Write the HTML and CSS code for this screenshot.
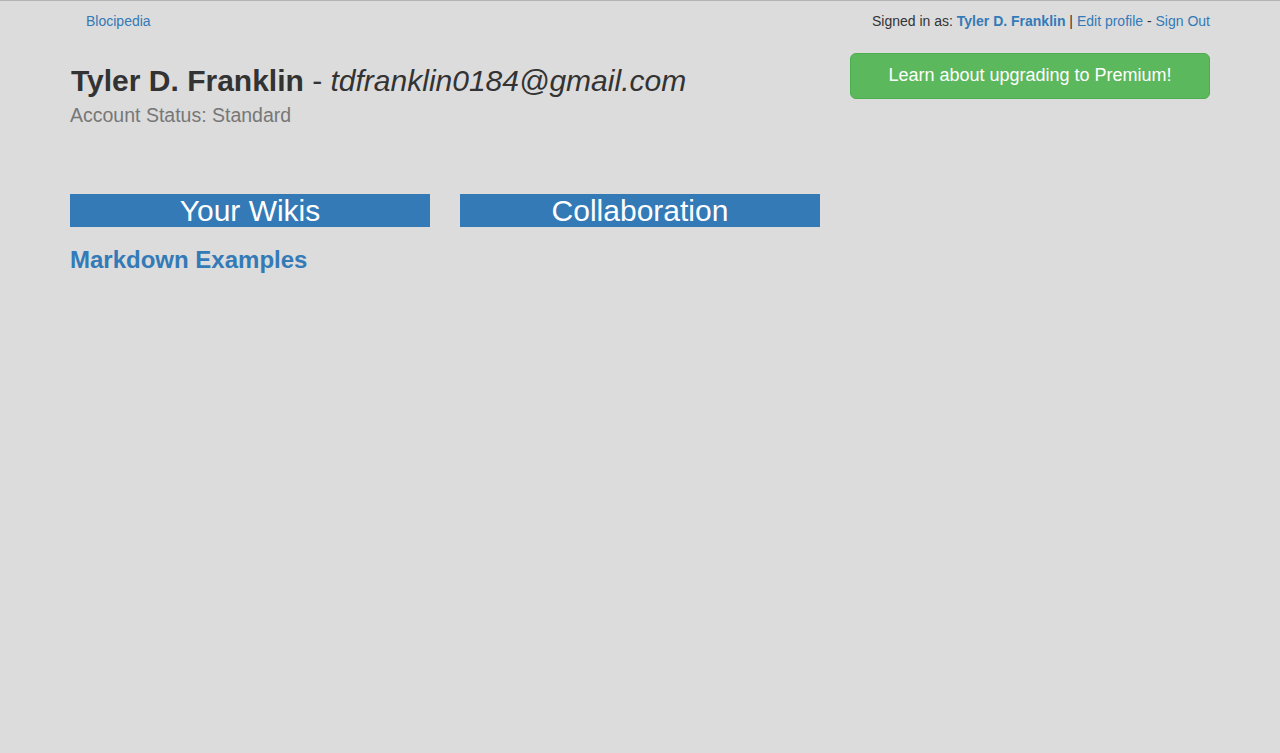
FILE: index.html
```html
<!DOCTYPE html>
<html>
<head>
<meta charset="utf-8">
<link rel="stylesheet" href="styles.css">
</head>
<body>
<div class="topline"></div>
<div class="container">
  <nav class="navbar">
    <a class="brand" href="#">Blocipedia</a>
    <div class="user-nav">Signed in as: <a class="uname" href="#">Tyler D. Franklin</a> | <a href="#">Edit profile</a> - <a href="#">Sign Out</a></div>
  </nav>
  <div class="row">
    <div class="col-8">
      <h2 class="title"><strong>Tyler D. Franklin</strong> - <em>tdfranklin0184@gmail.com</em></h2>
      <div class="status">Account Status: Standard</div>
    </div>
    <div class="col-4">
      <a class="btn-premium" href="#">Learn about upgrading to Premium!</a>
    </div>
  </div>
  <div class="row lists">
    <div class="col-4">
      <div class="box-head">Your Wikis</div>
      <h3 class="wiki"><a href="#">Markdown Examples</a></h3>
    </div>
    <div class="col-4">
      <div class="box-head">Collaboration</div>
    </div>
  </div>
</div>
</body>
</html>
```
FILE: styles.css
```css
html, body {
  margin: 0;
  padding: 0;
  background: #dcdcdc;
  font-family: "Liberation Sans", Arial, sans-serif;
  font-size: 14px;
  line-height: 1.42857;
  color: #333;
}
a { color: #337ab7; text-decoration: none; }
.topline { height: 1px; background: #b4b4b4; }
.container {
  width: 1140px;
  margin: 0 auto;
  padding: 0 15px;
}
.navbar {
  display: flex;
  justify-content: space-between;
  align-items: flex-start;
  padding-top: 11px;
  height: 40px;
}
.brand { margin-left: 16px; }
.uname { font-weight: bold; }
.row {
  display: flex;
  margin: 0 -15px;
}
.col-8 { width: 780px; padding: 0 15px; box-sizing: border-box; flex: none; }
.col-4 { width: 390px; padding: 0 15px; box-sizing: border-box; flex: none; }
.title {
  margin: 12px 0 0;
  font-size: 30px;
  font-weight: normal;
  line-height: 1.1;
  padding-left: 1px;
}
.title strong { font-weight: bold; }
.status {
  font-size: 19.5px;
  color: #777;
  margin-top: 5px;
}
.btn-premium {
  display: block;
  margin-top: 1px;
  background: #5cb85c;
  border: 1px solid #4cae4c;
  border-radius: 6px;
  color: #fff;
  font-size: 18px;
  line-height: 1.3333;
  padding: 10px 16px;
  text-align: center;
}
.lists { margin-top: 64px; }
.box-head {
  background: #337ab7;
  color: #fff;
  font-size: 30px;
  line-height: 33px;
  text-align: center;
}
.wiki {
  margin: 20px 0 0;
  font-size: 24px;
  line-height: 1.1;
  font-weight: bold;
}
```
